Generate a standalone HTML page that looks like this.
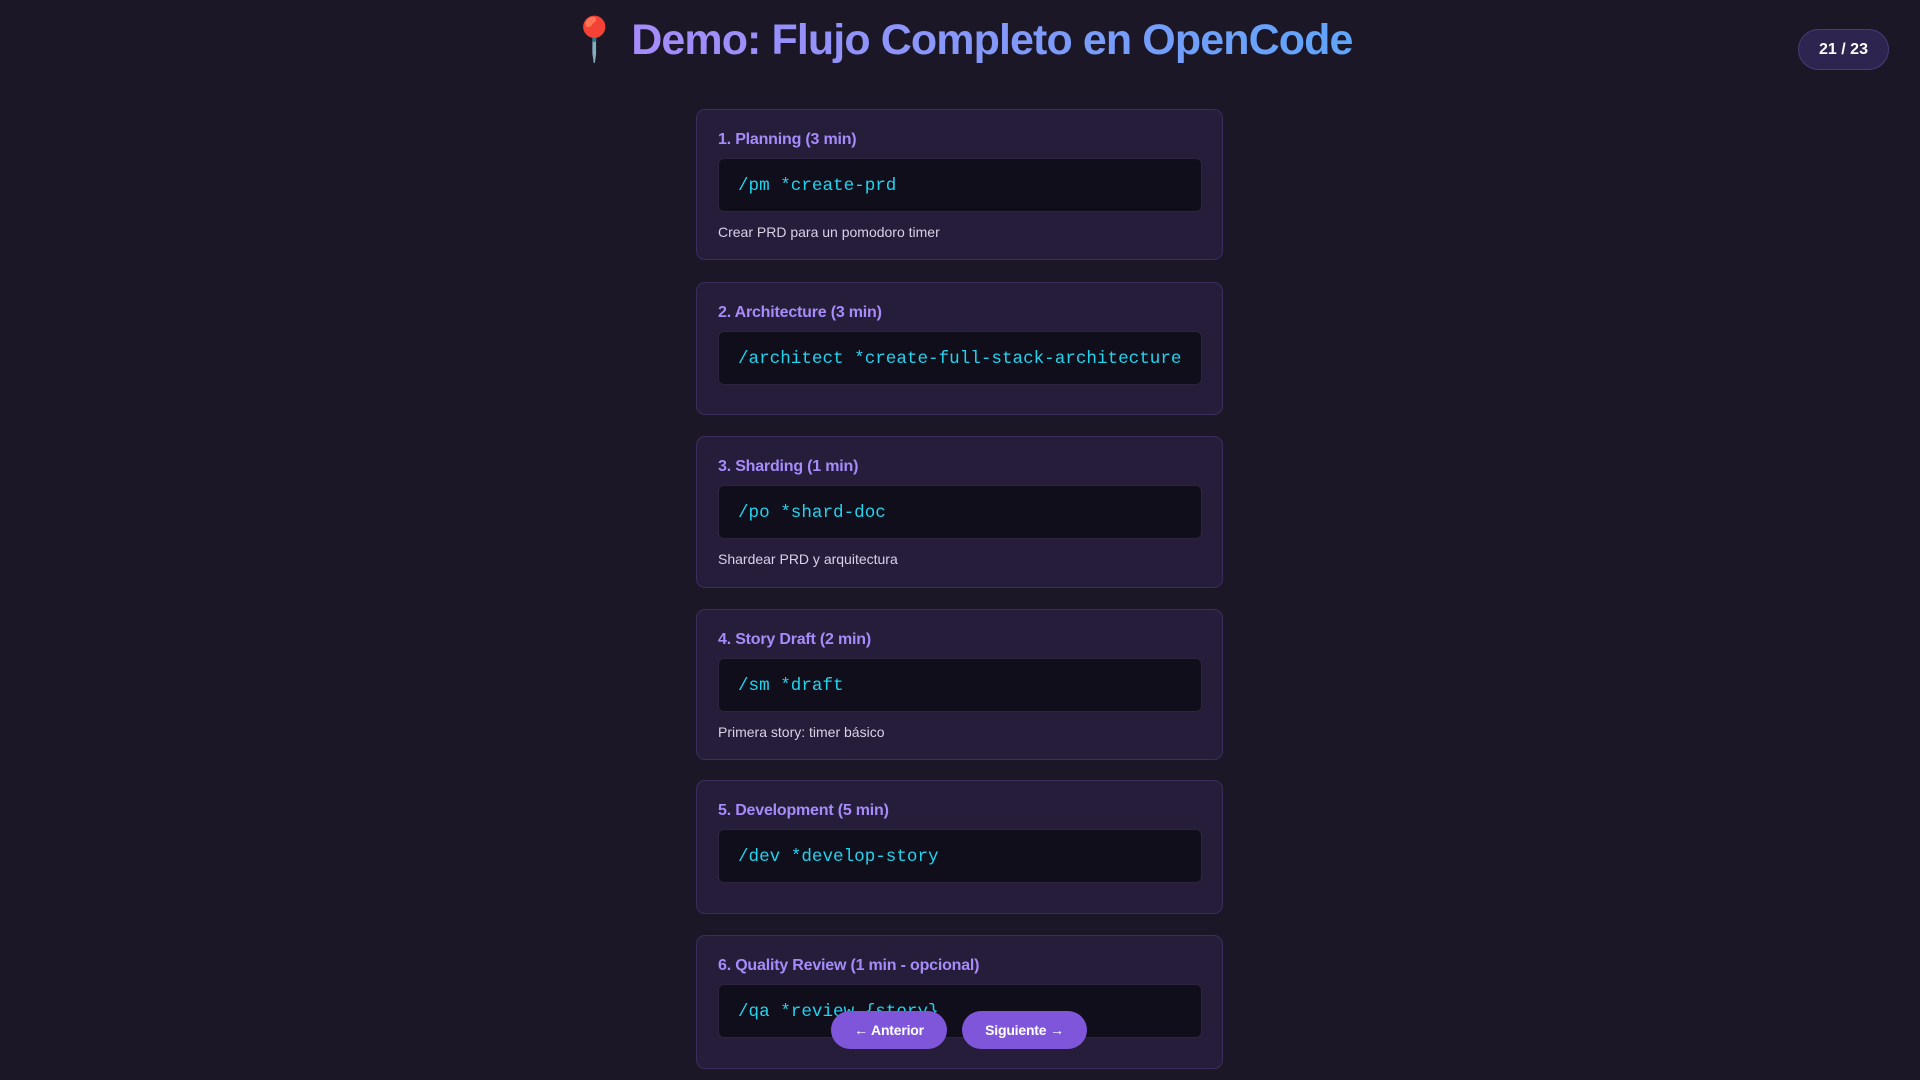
<!DOCTYPE html>
<html><head><meta charset="utf-8"><style>
html,body{margin:0;padding:0;width:1920px;height:1080px;overflow:hidden;background:#1b1726;font-family:"Liberation Sans",sans-serif;}
h1{position:absolute;top:1px;left:0;width:1920px;margin:0;text-align:center;line-height:78px;font-size:43px;font-weight:bold;letter-spacing:-0.9px;}
h1 .t{background:linear-gradient(90deg,#a78bfa,#60a5fa);-webkit-background-clip:text;background-clip:text;color:transparent;}
.ctr{position:absolute;left:1798px;top:29px;width:91px;height:41px;border-radius:21px;background:#2e2450;border:1px solid #4a3a78;box-sizing:border-box;color:#fff;font-weight:bold;font-size:16px;line-height:39px;text-align:center;}
.card{position:absolute;left:696px;width:527px;background:#251d3a;border:1px solid #3b2d5c;border-radius:9px;box-sizing:border-box;}
.lbl{position:absolute;left:21px;top:21px;color:#a78bfa;font-weight:bold;font-size:16px;letter-spacing:-0.2px;}
.code{position:absolute;left:21px;top:48px;width:484px;height:54px;box-sizing:border-box;background:#100e1a;border:1px solid #2d2540;border-radius:6px;color:#22d3ee;font-family:"Liberation Mono","DejaVu Sans Mono",monospace;font-size:17.6px;line-height:54px;padding-left:19px;white-space:nowrap;}
.desc{position:absolute;left:21px;top:114px;color:#d8d2e8;font-size:14px;}
.btn{position:absolute;top:1011px;height:38px;border-radius:19px;background:#7f56d9;color:#fff;font-weight:bold;font-size:14px;line-height:38px;text-align:center;letter-spacing:-0.2px;}
</style></head><body>
<h1><span>📍</span> <span class="t">Demo: Flujo Completo en OpenCode</span></h1>
<div class="ctr">21 / 23</div>
<div class="card" style="top:109px;height:151px"><div class="lbl">1. Planning (3 min)</div><div class="code">/pm *create-prd</div><div class="desc">Crear PRD para un pomodoro timer</div></div>
<div class="card" style="top:282px;height:133px"><div class="lbl">2. Architecture (3 min)</div><div class="code">/architect *create-full-stack-architecture</div></div>
<div class="card" style="top:436px;height:152px"><div class="lbl">3. Sharding (1 min)</div><div class="code">/po *shard-doc</div><div class="desc">Shardear PRD y arquitectura</div></div>
<div class="card" style="top:609px;height:151px"><div class="lbl">4. Story Draft (2 min)</div><div class="code">/sm *draft</div><div class="desc">Primera story: timer básico</div></div>
<div class="card" style="top:780px;height:134px"><div class="lbl">5. Development (5 min)</div><div class="code">/dev *develop-story</div></div>
<div class="card" style="top:935px;height:134px"><div class="lbl">6. Quality Review (1 min - opcional)</div><div class="code">/qa *review {story}</div></div>
<div class="btn" style="left:831px;width:116px">← Anterior</div>
<div class="btn" style="left:962px;width:125px">Siguiente →</div>
</body></html>
